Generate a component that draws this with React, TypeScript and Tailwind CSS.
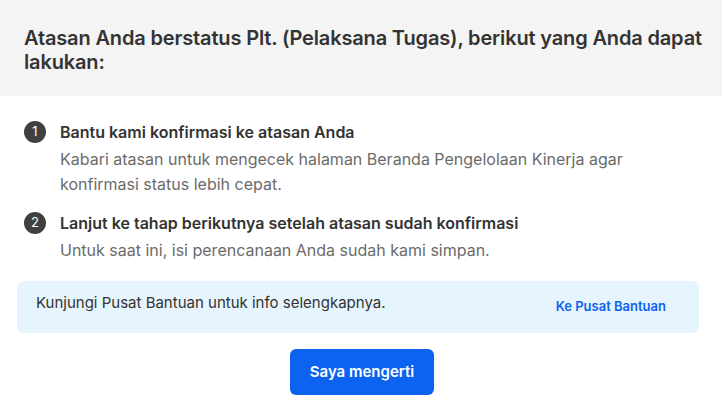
import React from "react";

const steps = [
  {
    title: "Bantu kami konfirmasi ke atasan Anda",
    desc: "Kabari atasan untuk mengecek halaman Beranda Pengelolaan Kinerja agar konfirmasi status lebih cepat.",
  },
  {
    title: "Lanjut ke tahap berikutnya setelah atasan sudah konfirmasi",
    desc: "Untuk saat ini, isi perencanaan Anda sudah kami simpan.",
  },
];

const App = () => {
  return (
    <div className="w-[724px] h-[419px] bg-white font-['Inter',sans-serif]">
      <div className="w-[722px] bg-[#f4f4f4] pl-6 pr-2 pt-[26px] pb-[22px]">
        <h2 className="text-[20px] leading-6 font-semibold tracking-[-0.15px] text-[#333333]">
          Atasan Anda berstatus Plt. (Pelaksana Tugas), berikut yang Anda dapat lakukan:
        </h2>
      </div>
      <div className="px-6 pt-6 flex flex-col gap-[14px]">
        {steps.map((s, i) => (
          <div key={i} className="flex gap-[14px]">
            <div className="w-[22px] h-[22px] mt-[1px] shrink-0 rounded-full bg-[#404040] text-white text-[13px] flex items-center justify-center">
              {i + 1}
            </div>
            <div className="flex flex-col gap-[3px]">
              <p className="text-[16px] leading-6 font-semibold text-[#333333]">{s.title}</p>
              <p className="text-[16px] leading-[25px] text-[#6b6b6b]">{s.desc}</p>
            </div>
          </div>
        ))}
      </div>
      <div className="mx-[17px] mt-[18px] w-[682px] h-[52px] rounded-md bg-[#e6f4fd] flex items-center justify-between pl-[19px] pr-[33px]">
        <p className="text-[15px] text-[#333333] -mt-[8px]">Kunjungi Pusat Bantuan untuk info selengkapnya.</p>
        <a className="text-[13px] font-semibold text-[#0b63f0]">Ke Pusat Bantuan</a>
      </div>
      <div className="flex justify-center mt-[16px]">
        <button className="w-[144px] h-[46px] rounded-md bg-[#0b63f0] text-white text-[15px] font-semibold">
          Saya mengerti
        </button>
      </div>
    </div>
  );
};

export default App;
